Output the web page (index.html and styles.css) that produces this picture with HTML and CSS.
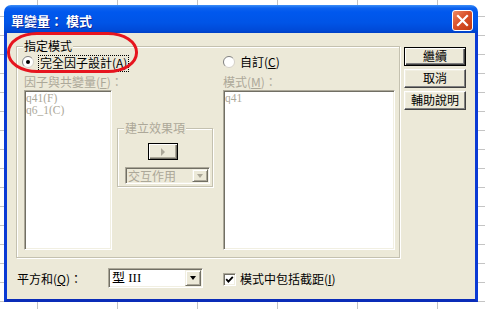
FILE: index.html
```html
<!DOCTYPE html>
<html lang="zh-Hant">
<head>
    <meta charset="UTF-8">
    <title>單變量： 模式</title>
    <link rel="stylesheet" href="styles.css">
</head>
<body>
    <div class="window">
        <div class="titlebar">
            <span class="title">單變量： 模式</span>
            <span class="close">
                <svg width="19" height="19" viewBox="0 0 19 19">
                    <path d="M5 5 L14 14 M14 5 L5 14" stroke="#fff" stroke-width="2.2" stroke-linecap="square"/>
                </svg>
            </span>
        </div>

        <div class="client">
            <div class="group">
                <span class="legend">指定模式</span>
                <div class="group-grid">
                    <div class="radio first">
                        <svg width="12" height="12" viewBox="0 0 12 12">
                            <circle cx="6" cy="6" r="5.5" fill="#fff"/>
                            <path d="M9.9 2.1 A5.5 5.5 0 0 0 2.1 9.9" stroke="#808080" fill="none"/>
                            <path d="M9.9 2.1 A5.5 5.5 0 0 1 2.1 9.9" stroke="#d4d0c8" fill="none"/>
                            <circle cx="6" cy="6" r="2" fill="#000"/>
                        </svg>
                        <span class="focus">完全因子設計(<u>A</u>)</span>
                    </div>
                    <div class="radio second">
                        <svg width="12" height="12" viewBox="0 0 12 12">
                            <circle cx="6" cy="6" r="5.5" fill="#fff"/>
                            <path d="M9.9 2.1 A5.5 5.5 0 0 0 2.1 9.9" stroke="#808080" fill="none"/>
                            <path d="M9.9 2.1 A5.5 5.5 0 0 1 2.1 9.9" stroke="#d4d0c8" fill="none"/>
                        </svg>
                        <span>自訂(<u>C</u>)</span>
                    </div>

                    <span class="dim-label wide">因子與共變量(<u>F</u>)：</span>
                    <span class="dim-label">模式(<u>M</u>)：</span>

                    <div class="listbox">
                        <div class="item">q41(F)</div>
                        <div class="item">q6_1(C)</div>
                    </div>

                    <div class="subgroup">
                        <span class="legend dim">建立效果項</span>
                        <span class="arrow-btn"><span class="tri-right"></span></span>
                        <div class="combo small disabled">
                            <span class="combo-text">交互作用</span>
                            <span class="drop-btn"><span class="tri-down grey"></span></span>
                        </div>
                    </div>

                    <div class="listbox">
                        <div class="item">q41</div>
                    </div>
                </div>
            </div>

            <div class="buttons">
                <span class="btn default">繼續</span>
                <span class="btn">取消</span>
                <span class="btn">輔助說明</span>
            </div>

            <div class="bottom">
                <span class="bottom-label">平方和(<u>Q</u>)：</span>
                <div class="combo big">
                    <span class="combo-text">型 III</span>
                    <span class="drop-btn"><span class="tri-down"></span></span>
                </div>
                <span class="checkbox">
                    <svg width="9" height="9" viewBox="0 0 9 9">
                        <polyline points="1.2,4.2 3.4,6.6 7.8,1.8" stroke="#000" stroke-width="1.8" fill="none"/>
                    </svg>
                </span>
                <span class="check-label">模式中包括截距(<u>I</u>)</span>
            </div>
        </div>

        <div class="mark"></div>
    </div>
</body>
</html>
```

FILE: styles.css
```css
* {
    box-sizing: border-box;
}
html {
    background-color: #fff;
    background-image:
        linear-gradient(to right, #c4c4c4 1px, transparent 1px),
        linear-gradient(to bottom, #c4c4c4 1px, transparent 1px);
    background-size: 80px 100%, 100% 19px;
    background-position: 37px 0, 0 16px;
}
body {
    margin: 0;
    font-family: "Noto Sans CJK TC", sans-serif;
    font-size: 12px;
    color: #000;
}
u {
    text-decoration: underline;
    text-underline-offset: 1px;
}

/* window frame */
.window {
    position: relative;
    width: 474px;
    height: 297px;
    margin: 5px 0 0 4px;
    display: flex;
    flex-direction: column;
}
.titlebar {
    height: 28px;
    flex: none;
    display: flex;
    align-items: center;
    justify-content: space-between;
    padding: 0 5px 0 7px;
    border-radius: 7px 7px 0 0;
    background: linear-gradient(to bottom, #3d8ff7 0, #0d62ee 3px, #0058ee 7px, #0054e6 18px, #004ad8 25px, #0040c6 28px);
}
.title {
    color: #fff;
    font-weight: bold;
    font-size: 13px;
    line-height: 13px;
    padding-top: 3px;
    text-shadow: 1px 1px #0a2a9a;
}
.close {
    width: 21px;
    height: 21px;
    margin-top: 3px;
    border: 1px solid #fff;
    border-radius: 3px;
    background: linear-gradient(to bottom right, #ef8a63, #d9512a 45%, #c3390f);
    display: flex;
    align-items: center;
    justify-content: center;
}
.client {
    flex: 1;
    background: #ece9d8;
    border: 3px solid #0a3ad4;
    border-top: 0;
    border-bottom-color: #0a2cb8;
    display: grid;
    grid-template-columns: 384px 62px;
    column-gap: 4px;
    align-content: start;
    padding: 13px 0 0 9px;
}
.mark {
    position: absolute;
    left: 3px;
    top: 27px;
    width: 131px;
    height: 41px;
    border: 3px solid #e6141e;
    border-radius: 30px / 20px;
}

/* group boxes */
.group {
    border: 1px solid #c4c1b0;
    box-shadow: inset 1px 1px #fff, 1px 1px #fff;
    padding: 0 4px 7px 7px;
}
.legend {
    display: block;
    width: fit-content;
    height: 12px;
    line-height: 12px;
    margin: -7px 0 0 -1px;
    padding: 0 1px;
    background: #ece9d8;
}
.dim {
    color: #aca899;
}
.group-grid {
    display: grid;
    grid-template-columns: 88px 111px 172px;
    align-items: start;
}
.radio {
    display: flex;
    align-items: center;
    gap: 4px;
    height: 12px;
    line-height: 12px;
    margin-top: 4px;
    white-space: nowrap;
}
.radio.first {
    grid-column: 1 / 3;
    margin-left: -2px;
}
.radio.second {
    gap: 5px;
}
.focus {
    border: 1px dotted #000;
    padding: 1px 1px 2px 1px;
    margin-top: 2px;
}
.dim-label {
    margin-top: 8px;
    line-height: 12px;
    color: #aca899;
    white-space: nowrap;
}
.dim-label.wide {
    grid-column: 1 / 3;
}
.listbox {
    height: 160px;
    margin-top: 2px;
    background: #fff;
    border: 1px solid;
    border-color: #aca899 #fff #fff #aca899;
    box-shadow: inset 1px 1px #716f64, inset -1px -1px #f1efe2;
    padding: 1px;
    font-family: "Liberation Serif", "Noto Sans CJK TC", serif;
    color: #aca899;
}
.item {
    height: 12px;
    line-height: 12px;
    font-size: 11.5px;
    overflow: hidden;
}
.subgroup {
    margin: 40px 10px 0 5px;
    border: 1px solid #c4c1b0;
    box-shadow: inset 1px 1px #fff, 1px 1px #fff;
    padding: 0 2px 2px 7px;
    display: flex;
    flex-direction: column;
}
.subgroup .legend {
    margin-left: -1px;
}
.arrow-btn {
    width: 30px;
    height: 17px;
    margin: 9px 0 0 23px;
    border: 1px solid #000;
    background: #ece9d8;
    box-shadow: inset 1px 1px #fff, inset -1px -1px #716f64, inset -2px -2px #aca899;
    display: flex;
    align-items: center;
    justify-content: center;
}
.tri-right {
    width: 0;
    height: 0;
    border-top: 4px solid transparent;
    border-bottom: 4px solid transparent;
    border-left: 4px solid #aca899;
}

/* combo boxes */
.combo {
    display: flex;
    border: 1px solid;
    border-color: #aca899 #fff #fff #aca899;
    box-shadow: inset 1px 1px #716f64, inset -1px -1px #f1efe2;
    padding: 1px;
    background: #fff;
}
.combo.small {
    width: 85px;
    height: 17px;
    margin-top: 7px;
}
.combo.disabled {
    background: #ece9d8;
    color: #aca899;
}
.combo.big {
    width: 95px;
    height: 20px;
}
.combo-text {
    flex: 1;
    line-height: 13px;
    padding-left: 1px;
    white-space: nowrap;
}
.combo.big .combo-text {
    padding-left: 2px;
    line-height: 16px;
    font-family: "Liberation Serif", "Noto Sans CJK TC", serif;
    font-size: 13px;
}
.drop-btn {
    width: 16px;
    background: #ece9d8;
    border: 1px solid;
    border-color: #f1efe2 #716f64 #716f64 #f1efe2;
    box-shadow: inset 1px 1px #fff, inset -1px -1px #aca899;
    display: flex;
    align-items: center;
    justify-content: center;
}
.tri-down {
    width: 0;
    height: 0;
    border-left: 3.5px solid transparent;
    border-right: 3.5px solid transparent;
    border-top: 4px solid #000;
}
.tri-down.grey {
    border-top-color: #aca899;
}

/* push buttons */
.buttons {
    display: flex;
    flex-direction: column;
    gap: 3px;
    margin-top: 1px;
    align-self: start;
}
.btn {
    height: 19px;
    line-height: 15px;
    text-align: center;
    background: #ece9d8;
    border: 1px solid;
    border-color: #fff #404040 #404040 #fff;
    box-shadow: inset -1px -1px #808080, inset 1px 1px #f1efe2;
}
.btn.default {
    border-color: #000;
    box-shadow: inset 1px 1px #fff, inset -1px -1px #404040, inset -2px -2px #808080;
}

/* bottom row */
.bottom {
    grid-column: 1 / 3;
    display: flex;
    align-items: center;
    margin: 10px 0 0 1px;
    line-height: 12px;
}
.bottom-label {
    width: 91px;
    padding-top: 2px;
}
.checkbox {
    width: 13px;
    height: 13px;
    margin: 2px 0 0 20px;
    background: #fff;
    border: 1px solid;
    border-color: #aca899 #fff #fff #aca899;
    box-shadow: inset 1px 1px #716f64, inset -1px -1px #f1efe2;
    display: flex;
    align-items: center;
    justify-content: center;
}
.check-label {
    margin-left: 4px;
    padding-top: 2px;
}
```
